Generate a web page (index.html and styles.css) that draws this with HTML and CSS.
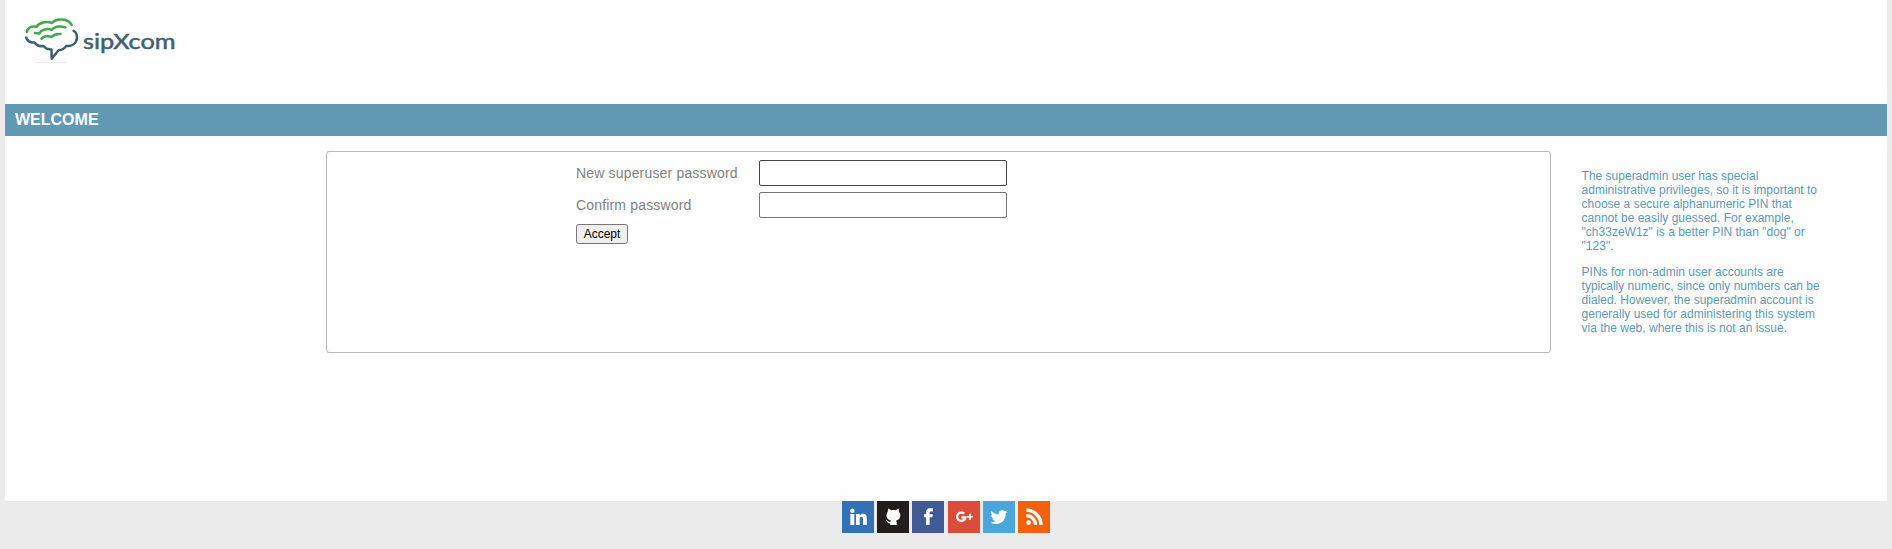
FILE: index.html
```html
<!DOCTYPE html>
<html lang="en">
<head>
<meta charset="utf-8">
<title>sipXcom</title>
<link rel="stylesheet" href="styles.css">
</head>
<body>
<div class="page">
  <header class="header">
    <svg class="logo" width="160" height="54" viewBox="20 12 160 54" role="img" aria-label="sipXcom">
      <g fill="none" stroke-width="2.5" stroke-linecap="round" stroke-linejoin="round">
        <g stroke="#43a84b">
          <path d="M26.8 32C27.5 28 31.5 25.5 36.5 26.8C39 22.8 46 20.8 52 23C56 18 68 17.8 71.800 25"/>
          <path d="M35 33L39 33.6C41.5 29.5 47 28 51.5 29.8C55 26 61 26 65.5 27.4"/>
          <path d="M41.5 38.7C43.5 36 48 35.6 51.5 37C54 34.3 57.5 33.8 60.5 34"/>
        </g>
        <path stroke="#3f6070" d="M26.2 37.5C27.5 41 31 42.8 34.5 42.5C37 46 40.5 46.5 43.5 46C46 49 48.500 49.500 51.500 49.400L51.700 58.700L58.500 50.300C62 50 64.500 48.800 66 46C72.500 46.500 76.500 43 77 37.800C77.200 34 75.700 32 73.600 30.700"/>
      </g>
      <path d="M36 62.500H66" stroke="#eee" stroke-width="1"/>
      <text class="logo-text" x="83" y="48.700" textLength="92.500" lengthAdjust="spacingAndGlyphs">sipXcom</text>
    </svg>
  </header>
  <h1 class="title">WELCOME</h1>
  <main class="content">
    <form class="panel">
      <label class="label" for="pw">New superuser password</label>
      <input class="field field-active" id="pw" type="password">
      <label class="label" for="pw2">Confirm password</label>
      <input class="field" id="pw2" type="password">
      <button class="accept" type="button">Accept</button>
    </form>
    <aside class="help">
      <p>The superadmin user has special administrative privileges, so it is important to choose a secure alphanumeric PIN that cannot be easily guessed. For example, "ch33zeW1z" is a better PIN than "dog" or "123".</p>
      <p>PINs for non-admin user accounts are typically numeric, since only numbers can be dialed. However, the superadmin account is generally used for administering this system via the web, where this is not an issue.</p>
    </aside>
  </main>
</div>
<footer class="social">
  <svg class="icon linkedin" viewBox="0 0 32 32"><circle cx="10.300" cy="9.700" r="2.200"/><path d="M8.300 13h4v11h-4zM14 13h3.700v1.500c.8-1.200 2-1.800 3.400-1.800 2.700 0 3.700 1.800 3.700 4.500V24H21v-6c0-1.400-.4-2.300-1.600-2.300S17.700 16.600 17.700 18V24H14z"/></svg>
  <svg class="icon github" viewBox="0 0 32 32"><path d="M11.500 7.500l2.700 1.700c1.500-.3 3-.3 4.500 0l2.700-1.700c.6 1 .7 2 .3 3.100 2 2 2 4.700.9 6.700-.7 1.300-2 2-3.700 2.300.6.7.8 1.400.8 2.400V24h-6.500v-1.700c-3 .4-2.700-2.400-4.500-2.800.6-.6 1.600-.3 2.200.5.7 1 1.400 1.300 2.400 1 .1-.7.3-1.100.7-1.500-4.600-.8-5.700-5.400-3.200-8.800-.1-1.100.1-2.200.7-3.200z"/></svg>
  <svg class="icon facebook" viewBox="0 0 32 32"><path d="M14.100 24v-7.700h-2v-3.100h2v-1.900c0-2.700 1.400-4 4-4h2.700v3.100h-1.700c-1.100 0-1.500.4-1.500 1.400v1.400h3.200l-.4 3.100h-2.800V24z"/></svg>
  <svg class="icon google" viewBox="0 0 32 32"><path fill="none" stroke="#fff" stroke-width="2.300" d="M16.200 12.700A4.200 4.200 0 1 0 17.500 16.300H13.300"/><path d="M21.100 12.800h1.700v2.100h2.100v1.700h-2.100v2.100h-1.700v-2.100H19v-1.700h2.100z"/></svg>
  <svg class="icon twitter" viewBox="0 0 32 32"><path d="M24.300 10.800c-.6.300-1.300.5-2 .5.700-.4 1.200-1.100 1.500-1.800-.7.400-1.400.7-2.100.8-2.200-2.300-6-.8-6 2.300v.8c-2.900-.1-5.300-1.500-7-3.500-1 1.700-.5 3.600 1.100 4.600-.6 0-1.100-.2-1.600-.4 0 1.700 1.200 3.200 2.800 3.500-.5.100-1 .1-1.600 0 .5 1.400 1.800 2.400 3.200 2.400-1.400 1.100-3.100 1.600-4.900 1.400 6.600 4 14.900.1 14.900-8.200v-.5c.7-.5 1.300-1.100 1.700-1.900z"/></svg>
  <svg class="icon rss" viewBox="0 0 32 32"><circle cx="10.600" cy="21.600" r="2.300"/><path fill="none" stroke="#fff" stroke-width="3.300" d="M8.300 14.700A9.200 9.200 0 0 1 17.500 23.900M8.300 9.200A14.700 14.700 0 0 1 23 23.900"/></svg>
</footer>
</body>
</html>
```
FILE: styles.css
```css
* {
  box-sizing: border-box;
}

body {
  margin: 0;
  height: 549px;
  overflow: hidden;
  background: #ebebeb;
  font-family: "Liberation Sans", Arial, sans-serif;
}

.page {
  height: 501px;
  margin: 0 5px;
  background: #fefefe;
}

.header {
  height: 104px;
  padding: 12px 15px;
}

.logo {
  display: block;
}

.logo-text {
  fill: #3f6070;
  stroke: #3f6070;
  stroke-width: 0.5px;
  font: 400 21.5px Lato, sans-serif;
}

.title {
  height: 32px;
  margin: 0;
  padding-left: 10px;
  background: #6199b5;
  color: #fff;
  font-size: 16px;
  line-height: 31px;
}

.content {
  display: flex;
  align-items: flex-start;
  padding: 15px 0 0 321px;
}

.panel {
  display: grid;
  grid-template-columns: 183px 248px;
  grid-auto-rows: 26px;
  row-gap: 6px;
  width: 1225px;
  height: 202px;
  padding: 8px 0 0 249px;
  border: 1px solid #b8b8b8;
  border-radius: 3px;
}

.label {
  color: #808080;
  font-size: 14px;
  letter-spacing: 0.17px;
  line-height: 26px;
}

.field {
  width: 248px;
  height: 26px;
  margin: 0;
  border: 1px solid #767676;
  border-radius: 2px;
  background: #fff;
  outline: none;
}

.field-active {
  border-color: #444;
}

.accept {
  width: 52px;
  height: 20px;
  padding: 0;
  border: 1px solid #767676;
  border-radius: 3px;
  background: #efefef;
  color: #000;
  font: 12px/18px "Liberation Sans", Arial, sans-serif;
}

.help {
  width: 240px;
  margin: 18px 0 0 30.6px;
  color: #6199b5;
  font-size: 12px;
  line-height: 14px;
}

.help p {
  margin: 0 0 12px;
}

.social {
  display: flex;
  justify-content: center;
  gap: 3.2px;
}

.icon {
  width: 32px;
  height: 32px;
  fill: #fff;
}

.linkedin { background: #3371b7; }
.github { background: #221e1b; }
.facebook { background: #405a98; }
.google { background: #dc4c3a; }
.twitter { background: #4ca6de; }
.rss { background: #f4610b; }
```
